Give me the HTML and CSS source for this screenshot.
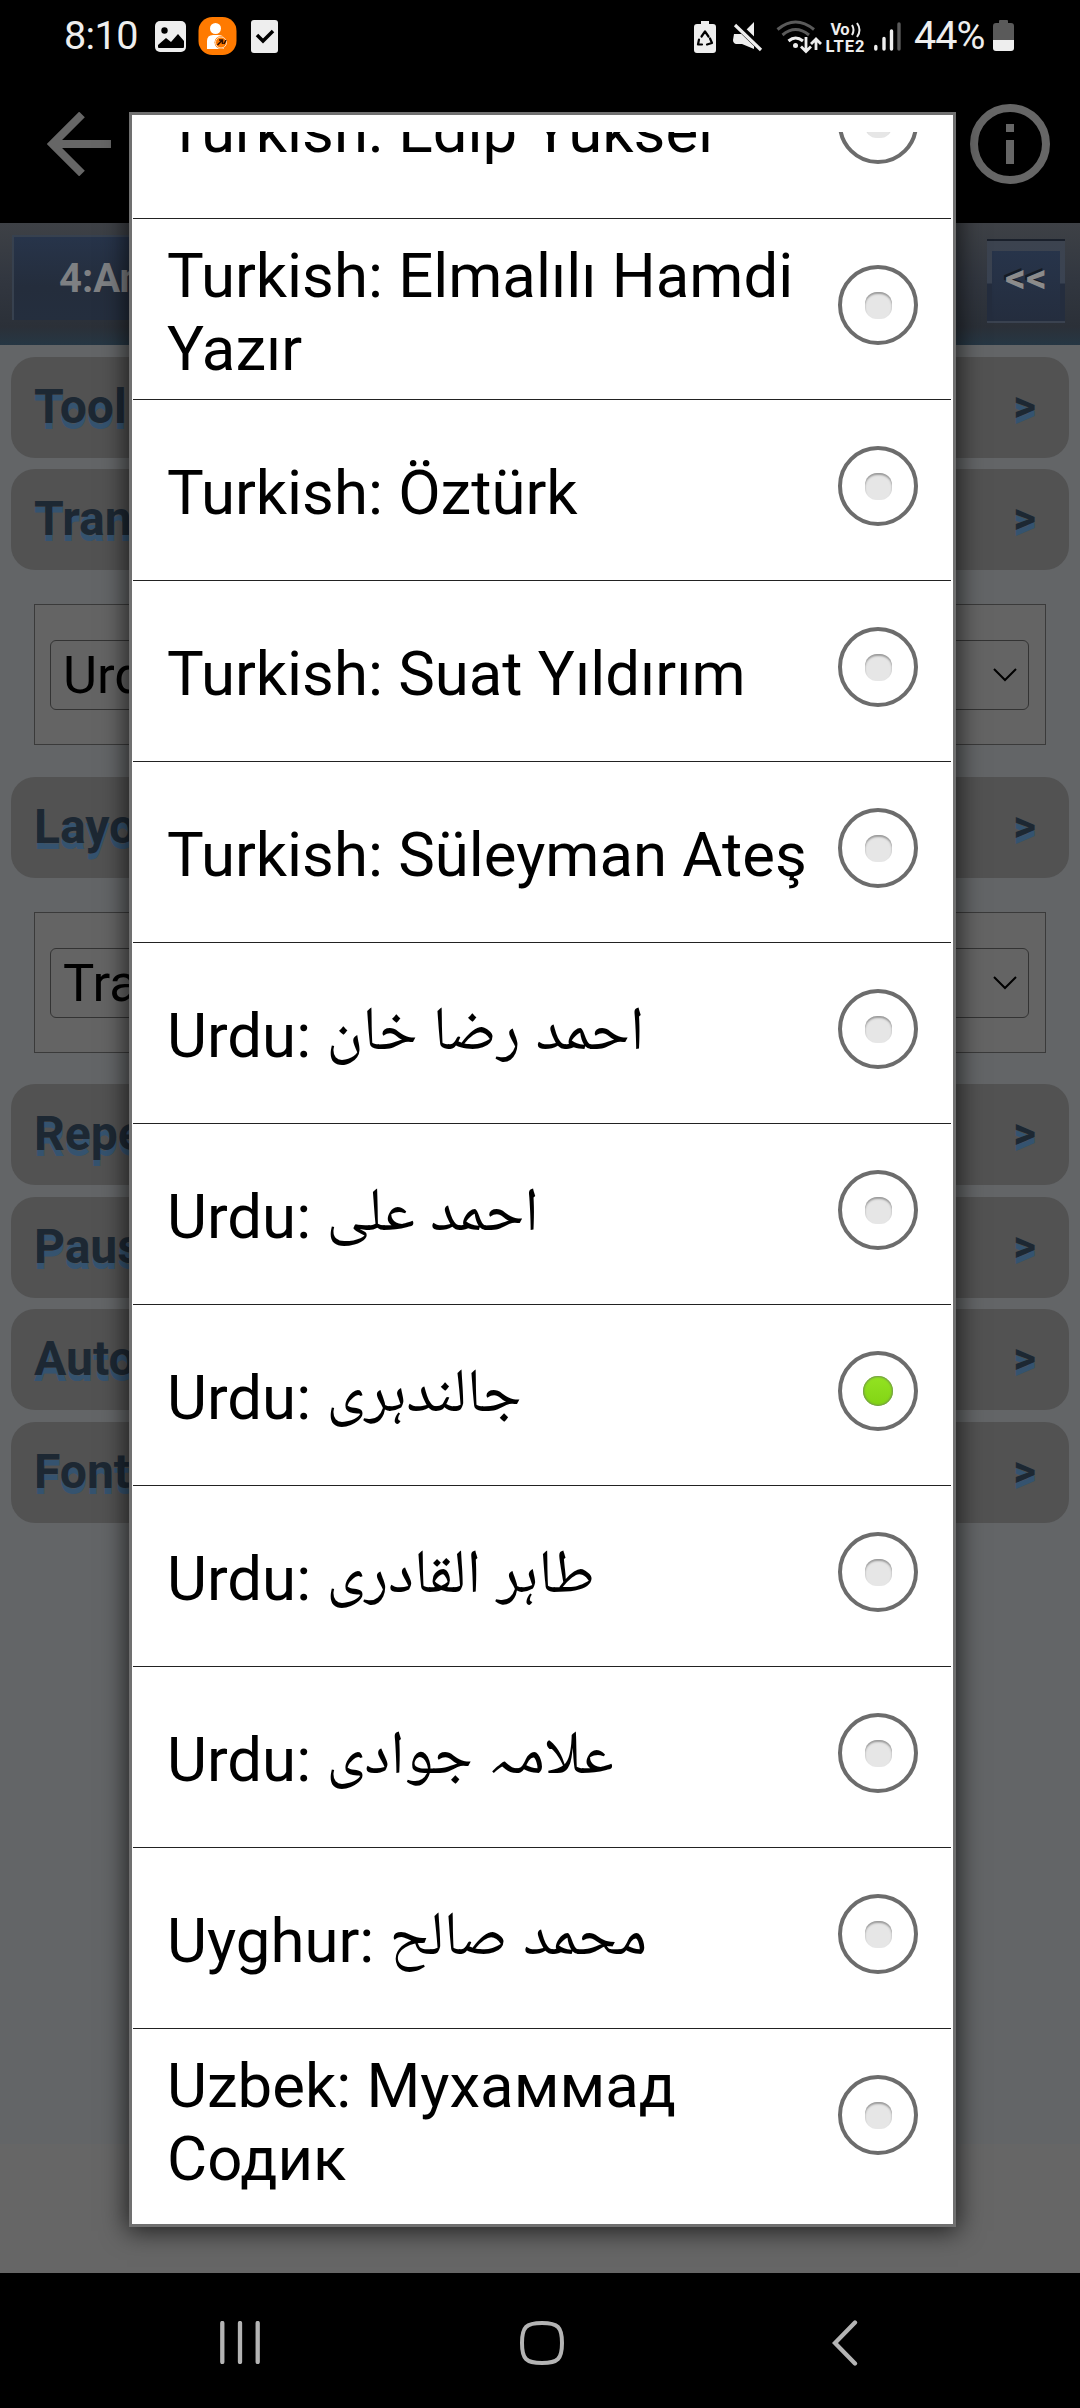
FILE: index.html
```
<!DOCTYPE html>
<html lang="en">
<head>
<meta charset="utf-8">
<title>Settings</title>
<link rel="stylesheet" href="styles.css">
</head>
<body>
<div class="screen">
  <header class="status">
    <span class="clock">8:10</span>
    <svg class="st-left" width="126" height="44" viewBox="152 14 126 44">
      <rect x="155" y="21" width="31" height="31" rx="5" fill="#eee"/>
      <circle cx="164.500" cy="30.500" r="3.200" fill="#000"/>
      <path d="M158 47v-2l8-7 5 4 7-8 6 7v6q0 1-1 1h-24q-1 0-1-1z" fill="#000"/>
      <rect x="198.500" y="17" width="38" height="38" rx="14" fill="#ff7a00"/>
      <circle cx="215.500" cy="28.500" r="5.500" fill="#fff"/>
      <path d="M207 49v-8q0-6 6-6h5q5 0 6 3v11z" fill="#fff"/>
      <circle cx="221" cy="42.500" r="6.500" fill="#ff7a00"/>
      <circle cx="221" cy="42.500" r="5.500" fill="none" stroke="#ffe0c0"/>
      <path d="M217.500 45l5-5M219 40h3.500v4M224 44l2-4" stroke="#301000" stroke-width="1.600" fill="none"/>
      <rect x="251" y="20" width="27" height="33" rx="3" fill="#eee"/>
      <path d="M257 35l6 6 10-10" fill="none" stroke="#000" stroke-width="3.500"/>
    </svg>
    <svg class="st-right" width="210" height="44" viewBox="693 14 210 44">
      <path d="M702 21h8v3h4q3 0 3 3v23q0 3-3 3h-16q-3 0-3-3V27q0-3 3-3h4z" fill="#eee"/>
      <path d="M702.500 36.500l3.500-5 3.500 5M711 38.500l2 4.500-5 1.500M703 44.500h-4l1-5" fill="none" stroke="#000" stroke-width="2.200" stroke-linejoin="round" stroke-linecap="round"/>
      <path d="M735 34h8l12-12v27l-12-5h-6q-3-1-3-4z" fill="#eee"/>
      <path d="M735 22l29 28" stroke="#000" stroke-width="7"/>
      <path d="M736 25l26 25" stroke="#eee" stroke-width="3.200"/>
      <g fill="none" stroke-width="3">
        <path d="M778.500 29.500q18-15 36.500 0M783.500 35q13-11 26.500 0" stroke="#5a5a5a"/>
        <path d="M789.500 41q7-6 14.500 0" stroke="#eee"/>
      </g>
      <circle cx="796.500" cy="45.500" r="2.500" fill="#eee"/>
      <path d="M807 37v14M802 46.500l5 5 5-5M817 50V39M812 44l5-5 5 5" stroke="#eee" stroke-width="2.800" fill="none"/>
      <text x="831.500" y="35" class="tiny" textLength="19">Vo</text>
      <path d="M853 25q3 5 0 10M858 23q5 7 0 14" stroke="#eee" stroke-width="2" fill="none"/>
      <text x="826.500" y="52" class="tiny" textLength="39">LTE2</text>
      <g stroke-linecap="round" stroke-width="3.400" stroke="#eee">
        <path d="M876.800 46.500v2.500M885 38.500V49M892.500 31v18"/>
        <path d="M900 24v25" stroke="#5a5a5a"/>
      </g>
    </svg>
    <span class="percent">44%</span>
    <svg class="battery" width="21" height="32" viewBox="0 0 21 32">
      <path d="M6 1q0-1 1-1h7q1 0 1 1v2h3q3 0 3 3v14H0V6q0-3 3-3h3z" fill="#5a5a5a"/>
      <path d="M0 20h21v8q0 3-3 3H3q-3 0-3-3z" fill="#eee"/>
    </svg>
  </header>
  <div class="appbar">
    <svg width="65" height="64" viewBox="0 0 65 64"><path d="M64 32H6M35 2.500L5.500 32 35 61.500" fill="none" stroke="#666" stroke-width="8"/></svg>
    <svg width="80" height="80" viewBox="0 0 80 80"><circle cx="40" cy="40" r="36" fill="none" stroke="#666" stroke-width="8"/><path d="M36 20h8v8h-8zM36 36h8v24h-8z" fill="#666"/></svg>
  </div>
  <div class="toolbar">
    <div class="chapter">4:An</div>
    <div class="prev"><span>&lt;&lt;</span></div>
  </div>
  <main class="page">
    <section class="bar"><span>Tool</span><i>&gt;</i></section>
    <section class="bar"><span>Tran</span><i>&gt;</i></section>
    <div class="field"><div class="select"><span>Urd</span><svg width="24" height="14" viewBox="0 0 24 14"><path d="M1 1l11 11L23 1" fill="none" stroke="#000" stroke-width="2"/></svg></div></div>
    <section class="bar"><span>Layo</span><i>&gt;</i></section>
    <div class="field"><div class="select"><span>Tra</span><svg width="24" height="14" viewBox="0 0 24 14"><path d="M1 1l11 11L23 1" fill="none" stroke="#000" stroke-width="2"/></svg></div></div>
    <section class="bar"><span>Repe</span><i>&gt;</i></section>
    <section class="bar"><span>Paus</span><i>&gt;</i></section>
    <section class="bar"><span>Auto</span><i>&gt;</i></section>
    <section class="bar"><span>Font</span><i>&gt;</i></section>
  </main>
  <nav class="nav">
    <svg width="40" height="43" viewBox="0 0 40 43"><path d="M2.300 2v39M20 2v39M37.700 2v39" stroke="#b4b4b4" stroke-width="4.300" stroke-linecap="round"/></svg>
    <svg width="44" height="44" viewBox="0 0 44 44"><path d="M22 2C38 2 42 6 42 22S38 42 22 42 2 38 2 22 6 2 22 2z" fill="none" stroke="#b4b4b4" stroke-width="4"/></svg>
    <svg width="26" height="46" viewBox="0 0 26 46"><path d="M23 2.500L3 23l20 20.500" fill="none" stroke="#b4b4b4" stroke-width="4.300" stroke-linecap="round"/></svg>
  </nav>

  <div class="dialog">
    <ul class="list">
      <li><span class="label">Turkish: Edip Yüksel</span><b class="radio"></b></li>
      <li class="two"><span class="label">Turkish: Elmalılı Hamdi Yazır</span><b class="radio"></b></li>
      <li><span class="label">Turkish: Öztürk</span><b class="radio"></b></li>
      <li><span class="label">Turkish: Suat Yıldırım</span><b class="radio"></b></li>
      <li><span class="label">Turkish: Süleyman Ateş</span><b class="radio"></b></li>
      <li><span class="label">Urdu: <bdi lang="ur">احمد رضا خان</bdi></span><b class="radio"></b></li>
      <li><span class="label">Urdu: <bdi lang="ur">احمد علی</bdi></span><b class="radio"></b></li>
      <li><span class="label">Urdu: <bdi lang="ur">جالندہری</bdi></span><b class="radio on"></b></li>
      <li><span class="label">Urdu: <bdi lang="ur">طاہر القادری</bdi></span><b class="radio"></b></li>
      <li><span class="label">Urdu: <bdi lang="ur">علامہ جوادی</bdi></span><b class="radio"></b></li>
      <li><span class="label">Uyghur: <bdi lang="ug">محمد صالح</bdi></span><b class="radio"></b></li>
      <li class="two last"><span class="label">Uzbek: Мухаммад Содик</span><b class="radio"></b></li>
    </ul>
  </div>
</div>
</body>
</html>
```
FILE: styles.css
```
* { box-sizing: border-box; }
body { margin: 0; background: #000; font-family: Roboto, "Noto Naskh Arabic", "Noto Sans Arabic", "DejaVu Sans", sans-serif; }
svg { display: block; flex: none; }
.screen { position: relative; width: 1080px; height: 2408px; overflow: hidden; display: flex; flex-direction: column; background: #000; }

.status { height: 72px; display: flex; align-items: center; padding-left: 64px; color: #eee; font-size: 39.500px; line-height: 74px; }
.clock { width: 88px; letter-spacing: -0.600px; }
.st-right { margin-left: 414px; }
.tiny { font: 700 16.500px Roboto, sans-serif; fill: #eee; }
.percent { width: 79px; padding-left: 12px; white-space: nowrap; letter-spacing: -1px; }
.battery { margin-left: 12px; }

.appbar { height: 151px; display: flex; justify-content: space-between; align-items: flex-start; padding: 32px 30px 0 47px; }
.appbar svg:first-child { margin-top: 8px; }

.toolbar { height: 122px; display: flex; justify-content: space-between; padding: 12px 15px 0 12px; background: linear-gradient(#3e4146, #323740 45%, #2b3038 85%, #263744); }
.chapter { width: 200px; height: 85px; border: 2px solid #37414f; border-bottom-width: 0; background: linear-gradient(#27344a, #242d3c 60%, #242e3e); color: #7e8083; font-weight: 700; font-size: 40px; line-height: 84px; padding-left: 45px; }
.prev {
  width: 78px; height: 84px; margin-top: 4px; border-top: 2px solid #1a202b; border-bottom: 2px solid #3a4250;
  background:
    linear-gradient(#27344a, #242d3e) 5px 10px / 68px 70px no-repeat,
    linear-gradient(#3c434f, #3a4352 42px, #242d3e 43px);
  color: #8b8b8b; font-weight: 700; font-size: 41px; line-height: 74px; text-align: center; text-shadow: -2px -2px #151b25;
}

.page { height: 1928px; padding: 12px 11px 0; background: linear-gradient(#636567, #636567) 0 0/100% 1799px no-repeat #666; }
.bar { height: 101px; margin-bottom: 11.400px; border-radius: 24px; background: #525252; padding: 0 33px 0 23px; display: flex; justify-content: space-between; color: #1d2833; font-weight: 700; font-size: 48px; line-height: 99px; text-shadow: 0 6px #35536f; }
.bar i { font-style: normal; font-size: 44px; }
.field { height: 141px; margin: 34px 23px 31.500px; border: 1px solid #3a3a3a; background: #646464; padding: 35px 16px 0 15px; }
.select { height: 70px; border: 1px solid #333; border-radius: 6px; display: flex; justify-content: space-between; align-items: center; padding: 0 11px 0 12px; font-size: 52.500px; line-height: 66px; color: #000; }

.nav { height: 135px; display: flex; align-items: center; padding: 4px 0 0 220px; }
.nav svg:nth-child(2) { margin-left: 260px; }
.nav svg:nth-child(3) { margin-left: 268px; }

.dialog { position: absolute; left: 129px; top: 112px; width: 827px; height: 2115px; border: 3px solid #707070; background: #fff; padding-top: 17px; box-shadow: 0 2px 24px 2px rgba(0, 0, 0, .7); }
.list { list-style: none; margin: 0; padding: 0 2px 0 1px; height: 2090px; overflow: hidden; }
.list li { height: 181px; border-bottom: 1px solid #222; display: flex; justify-content: space-between; align-items: flex-start; padding: 57px 33px 0 34px; }
.list li:first-child { margin-top: -94px; }
.list li.two { padding-top: 21px; }
.list li.last { border-bottom: 0; }
.label { width: 650px; font-size: 61.700px; line-height: 73px; color: #000; }
.label bdi { position: relative; top: -8px; display: inline-block; white-space: nowrap; line-height: 60px; }
.radio { flex: none; width: 80px; height: 80px; border: 4px solid #6c6c6c; border-radius: 50%; margin-top: -11px; background: #fff; display: flex; align-items: center; justify-content: center; }
.two .radio { margin-top: 25px; }
.radio::after { content: ""; width: 27px; height: 27px; border-radius: 12px; background: #e6e6e6; box-shadow: inset 0 2px 2px #999; }
.radio.on::after { width: 30px; height: 30px; border-radius: 50%; background: linear-gradient(#93e322, #82d414); box-shadow: inset 0 0 2px 1px #6f8f50; }
```
